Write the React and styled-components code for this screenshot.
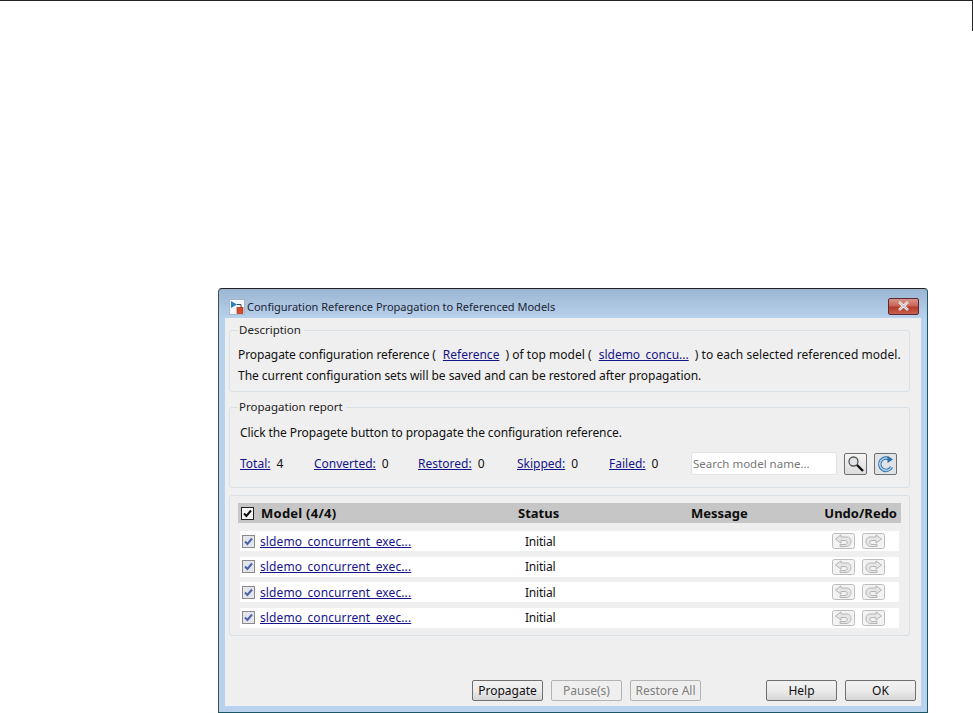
import styled, { createGlobalStyle } from "styled-components";

const Global = createGlobalStyle`
  * {
    box-sizing: border-box;
  }
  html,
  body {
    margin: 0;
    background: #fff;
    overflow: hidden;
  }
  body {
    font-family: "Noto Sans", "Liberation Sans", sans-serif;
    font-size: 12px;
    color: #111;
  }
`;

const Page = styled.div`
  position: relative;
  height: 713px;
  border-top: 1px solid #222;
  padding: 287px 45px 0 218px;

  &::after {
    content: "";
    position: absolute;
    top: 0;
    right: 0;
    width: 1px;
    height: 30px;
    background: #222;
  }
`;

const Window = styled.div`
  width: 710px;
  height: 425px;
  display: flex;
  flex-direction: column;
  padding: 0 6px 6px;
  border: 1px solid #1b5566;
  border-top-color: #222;
  border-left-color: #3d4f5c;
  border-radius: 4px 4px 0 0;
  background: linear-gradient(#9bb5d2 0, #b9d2ee 30px, #b9d2ee 100%);
`;

const TitleBar = styled.div`
  height: 29px;
  flex: none;
  display: flex;
  align-items: center;
  gap: 2px;
  padding: 6px 2px 0 4px;
  font-size: 11px;
  color: #1a2430;
`;

const TitleText = styled.span`
  flex: 1;
`;

const CloseButton = styled.div`
  width: 31px;
  height: 17px;
  margin-top: -1px;
  display: flex;
  align-items: center;
  justify-content: center;
  border: 1px solid #5a2a33;
  border-radius: 2px;
  background: linear-gradient(#d9928a 0, #c9665a 45%, #b23a2a 55%, #c9604f 100%);
`;

const Content = styled.div`
  flex: 1;
  display: flex;
  flex-direction: column;
  padding: 5px 11px 5px 4px;
  background: #efefef;
`;

const Group = styled.fieldset`
  margin: 0 0 ${(p) => p.$after}px;
  padding: 0 8px;
  height: ${(p) => p.$height}px;
  border: 1px solid #d9e0e6;
  border-radius: 3px;
  min-width: 0;
`;

const Legend = styled.legend`
  padding: 0 3px 0 1px;
  margin-left: 0;
  font-size: 11.5px;
  line-height: 14px;
  color: #222;
`;

const TextLine = styled.div`
  height: 21px;
  line-height: 21px;
  margin-top: ${(p) => p.$top || 0}px;
  padding-left: ${(p) => p.$indent || 0}px;
  white-space: pre;
  letter-spacing: ${(p) => p.$track || 0}px;
`;

const Tracked = styled.span`
  letter-spacing: ${(p) => p.$track}px;
`;

const Link = styled.a`
  color: #16148a;
  text-decoration: underline;
  cursor: pointer;
`;

const InlineLink = styled(Link)`
  margin: 0 6px 0 7px;
`;

const StatsRow = styled.div`
  display: flex;
  align-items: center;
  margin-top: 9px;
  padding-left: 2px;
`;

const Stat = styled.div`
  width: ${(p) => p.$width}px;
  flex: none;
  display: flex;
  gap: 6px;
`;

const Search = styled.input`
  width: 146px;
  height: 23px;
  flex: none;
  padding: 0 1px;
  border: 1px solid #dfe3e8;
  border-radius: 2px;
  background: #fff;
  font: inherit;
  font-size: 11.5px;

  &::placeholder {
    color: #777;
    opacity: 1;
  }
`;

const ToolButton = styled.div`
  width: 23px;
  height: 22px;
  flex: none;
  margin-left: 7px;
  display: flex;
  align-items: center;
  justify-content: center;
  border: 1px solid #6f6f6f;
  border-radius: 2px;
  background: ${(p) => p.$bg};
`;

const TablePanel = styled.div`
  height: 141px;
  flex: none;
  padding: 7px 8px 0;
  border: 1px solid #d9e0e6;
  border-radius: 3px;
`;

const Columns = `
  display: grid;
  grid-template-columns: 280px 173px 1fr auto;
  align-items: center;
`;

const HeaderRow = styled.div`
  ${Columns}
  height: 20px;
  margin-bottom: 8px;
  padding-right: 4px;
  background: #c6c6c6;
  font-weight: 700;
  font-size: 13px;
  color: #0d0d0d;
`;

const ModelHead = styled.div`
  display: flex;
  align-items: center;
  gap: 7px;
  padding-left: 3px;
  letter-spacing: 0.25px;
`;

const Row = styled.div`
  ${Columns}
  height: 20px;
  margin: 0 2px 5.6px;
  padding-right: 14px;
  background: #fff;
`;

const ModelCell = styled.div`
  display: flex;
  align-items: center;
  gap: 5px;
  padding-left: 2px;
  letter-spacing: 0.1px;
`;

const StatusCell = styled.div`
  padding-left: 5px;
  grid-column: 2;
  letter-spacing: -0.2px;
`;

const UndoCell = styled.div`
  grid-column: 4;
  display: flex;
  gap: 7px;
`;

const Footer = styled.div`
  margin: auto -6px 0 0;
  display: flex;
  gap: 8px;
`;

const Button = styled.div`
  width: 71px;
  height: 21px;
  flex: none;
  margin-left: ${(p) => p.$left || 0}px;
  display: flex;
  align-items: center;
  justify-content: center;
  border: 1px solid ${(p) => (p.$off ? "#b4b4b4" : "#6f6f6f")};
  border-radius: 2px;
  background: ${(p) =>
    p.$off ? "#efefef" : "linear-gradient(#f2f2f2 0, #ebebeb 50%, #d6d6d6 100%)"};
  color: ${(p) => (p.$off ? "#7f7f7f" : "#111")};
`;

const CheckBox = ({ dark }) => (
  <svg width="13" height="13" viewBox="0 0 13 13">
    <rect x="0.5" y="0.5" width="12" height="12" fill={dark ? "#f6f6f6" : "#e4e6ec"} stroke={dark ? "#222" : "#8a8a8a"} />
    <path
      d="M3 6.5 L5.4 9 L10 3.5"
      fill="none"
      stroke={dark ? "#111" : "#4d62ad"}
      strokeWidth="2"
    />
  </svg>
);

const AppIcon = () => (
  <svg width="16" height="16" viewBox="0 0 16 16">
    <rect x="0.5" y="0.5" width="15" height="15" fill="#f4f7fb" stroke="#a9b6c6" />
    <path d="M2 2 L8 5.5 L2 9 Z" fill="#2a7fc4" />
    <path d="M8 5.5 H12 V9" fill="none" stroke="#444" />
    <rect x="8" y="8.5" width="6" height="6" fill="#d9492b" stroke="#8c2a14" strokeWidth="0.6" />
  </svg>
);

const CloseIcon = () => (
  <svg width="13" height="10" viewBox="0 0 13 10">
    <path d="M2 1 L11 9 M11 1 L2 9" stroke="#f2f2f2" strokeWidth="2.6" />
    <path d="M2 1 L11 9 M11 1 L2 9" stroke="#8d8d94" strokeWidth="0.6" />
  </svg>
);

const SearchIcon = () => (
  <svg width="18" height="18" viewBox="0 0 18 18">
    <circle cx="6.5" cy="6.5" r="4.5" fill="#dfe5ea" stroke="#555" strokeWidth="1.3" />
    <path d="M10 10 L16 16" stroke="#111" strokeWidth="2.4" />
  </svg>
);

const RefreshIcon = () => (
  <svg width="18" height="18" viewBox="0 0 18 18">
    <path
      d="M13 4.5 A6.2 6.2 0 1 0 14.5 12"
      fill="none"
      stroke="#2f6ea6"
      strokeWidth="3.4"
    />
    <path
      d="M13 4.5 A6.2 6.2 0 1 0 14.5 12"
      fill="none"
      stroke="#a9cdeb"
      strokeWidth="1.6"
    />
    <path d="M10.5 1 L16 4.5 L10.5 8 Z" fill="#2f6ea6" />
  </svg>
);

const HistoryIcon = ({ flip }) => (
  <svg width="23" height="16" viewBox="0 0 23 16">
    <rect x="0.5" y="0.5" width="22" height="15" rx="2" fill="#f3f3f3" stroke="#bdbdbd" />
    <g transform={flip ? "matrix(-1 0 0 1 23 0)" : undefined}>
      <path
        d="M3.5 6 L9 1.8 V4 H15 C20.5 4 20.5 13.5 14 13.5 H8 V11.5 H13 C16 11.5 16 7.5 13 7.5 H9 V10.2 Z"
        fill="#e6e6e6"
        stroke="#b5b5b5"
      />
    </g>
  </svg>
);

const stats = [
  { label: "Total:", value: "4", width: 74 },
  { label: "Converted:", value: "0", width: 104 },
  { label: "Restored:", value: "0", width: 99 },
  { label: "Skipped:", value: "0", width: 92 },
  { label: "Failed:", value: "0", width: 82 },
];

const App = () => (
  <Page>
    <Global />
    <Window>
      <TitleBar>
        <AppIcon />
        <TitleText>Configuration Reference Propagation to Referenced Models</TitleText>
        <CloseButton>
          <CloseIcon />
        </CloseButton>
      </TitleBar>
      <Content>
        <Group $height={69} $after={8}>
          <Legend>Description</Legend>
          <TextLine $top={7}>
            <Tracked $track={-0.1}>Propagate configuration reference (</Tracked>
            <InlineLink>Reference</InlineLink>
            <Tracked $track={0.03}>) of top model (</Tracked>
            <InlineLink>sldemo_concu...</InlineLink>
            <Tracked $track={0.05}>) to each selected referenced model.</Tracked>
          </TextLine>
          <TextLine $track={-0.045}>
            The current configuration sets will be saved and can be restored after propagation.
          </TextLine>
        </Group>
        <Group $height={88} $after={7}>
          <Legend>Propagation report</Legend>
          <TextLine $top={8} $indent={2} $track={-0.09}>
            Click the Propagete button to propagate the configuration reference.
          </TextLine>
          <StatsRow>
            {stats.map((s) => (
              <Stat key={s.label} $width={s.width}>
                <Link>{s.label}</Link>
                <span>{s.value}</span>
              </Stat>
            ))}
            <Search placeholder="Search model name..." readOnly />
            <ToolButton $bg="linear-gradient(#f6f6f6, #dcdcdc)">
              <SearchIcon />
            </ToolButton>
            <ToolButton $bg="#dfe3e6">
              <RefreshIcon />
            </ToolButton>
          </StatsRow>
        </Group>
        <TablePanel>
          <HeaderRow>
            <ModelHead>
              <CheckBox dark />
              Model (4/4)
            </ModelHead>
            <span>Status</span>
            <span>Message</span>
            <span>Undo/Redo</span>
          </HeaderRow>
          {[0, 1, 2, 3].map((i) => (
            <Row key={i}>
              <ModelCell>
                <CheckBox />
                <Link>sldemo_concurrent_exec...</Link>
              </ModelCell>
              <StatusCell>Initial</StatusCell>
              <UndoCell>
                <HistoryIcon />
                <HistoryIcon flip />
              </UndoCell>
            </Row>
          ))}
        </TablePanel>
        <Footer>
          <Button $left={243}>Propagate</Button>
          <Button $off>Pause(s)</Button>
          <Button $off>Restore All</Button>
          <Button $left={57}>Help</Button>
          <Button>OK</Button>
        </Footer>
      </Content>
    </Window>
  </Page>
);

export default App;
